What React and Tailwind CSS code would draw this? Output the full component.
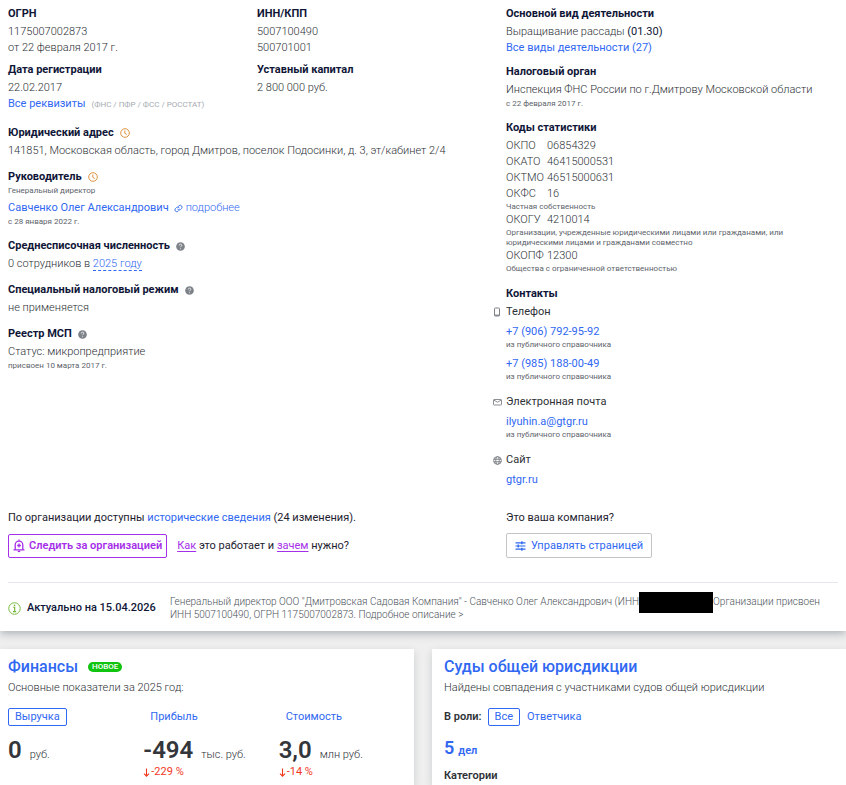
import React, { useState } from 'react';
import clsx from 'clsx';

const statCodes = [
  { name: 'ОКПО', value: '06854329' },
  { name: 'ОКАТО', value: '46415000531' },
  { name: 'ОКТМО', value: '46515000631' },
  { name: 'ОКФС', value: '16', note: 'Частная собственность' },
  {
    name: 'ОКОГУ',
    value: '4210014',
    note: 'Организации, учрежденные юридическими лицами или гражданами, или юридическими лицами и гражданами совместно',
  },
  { name: 'ОКОПФ', value: '12300', note: 'Общества с ограниченной ответственностью' },
];

const finance = [
  { tab: 'Выручка', value: '0', unit: 'руб.' },
  { tab: 'Прибыль', value: '-494', unit: 'тыс. руб.', change: '-229 %' },
  { tab: 'Стоимость', value: '3,0', unit: 'млн руб.', change: '-14 %' },
];

const ClockIcon = () => (
  <svg viewBox="0 0 10 10" className="w-[10px] h-[10px] shrink-0" fill="none" stroke="#dd9340">
    <circle cx="5" cy="5" r="4.3" />
    <path d="M4.8 2.5v2.8l2 1.2" />
  </svg>
);

const HelpIcon = () => (
  <svg viewBox="0 0 10 10" className="w-[9px] h-[9px] shrink-0">
    <circle cx="5" cy="5" r="4.8" fill="#7d8288" />
    <path d="M3.5 3.9c0-2 3-2 3-.2 0 1-1.4 1.1-1.4 2.1M5.1 7v1" fill="none" stroke="#fff" strokeWidth="0.9" />
  </svg>
);

const LinkIcon = () => (
  <svg viewBox="0 0 24 24" className="w-[9px] h-[9px] shrink-0" fill="none" stroke="#3d73f0" strokeWidth="2.6" strokeLinecap="round">
    <path d="M10 14a5 5 0 0 0 7.5.5l3-3a5 5 0 0 0-7-7l-1.7 1.7" />
    <path d="M14 10a5 5 0 0 0-7.5-.5l-3 3a5 5 0 0 0 7 7l1.7-1.7" />
  </svg>
);

const PhoneIcon = () => (
  <svg viewBox="0 0 8 10" className="w-[8px] h-[10px]" fill="none" stroke="#7d8288">
    <rect x="1.5" y="1" width="5" height="8" rx="0.8" />
    <path d="M1.5 8.2h5" strokeWidth="1.2" />
  </svg>
);

const MailIcon = () => (
  <svg viewBox="0 0 9 8" className="w-[9px] h-[8px]" fill="none" stroke="#7d8288" strokeWidth="0.9">
    <rect x="0.5" y="1.5" width="8" height="5.5" rx="0.6" />
    <path d="M1 2.2l3.5 2 3.5-2" />
  </svg>
);

const GlobeIcon = () => (
  <svg viewBox="0 0 10 10" className="w-[9px] h-[9px]" fill="none" stroke="#7d8288" strokeWidth="1.1">
    <circle cx="5" cy="5" r="4.3" />
    <ellipse cx="5" cy="5" rx="2" ry="4.3" />
    <path d="M0.8 3.6h8.4M0.8 6.4h8.4" />
  </svg>
);

const BellIcon = () => (
  <svg viewBox="0 0 12 14" className="w-[12px] h-[14px] shrink-0" fill="none" stroke="#a52ee8" strokeWidth="1.3">
    <path d="M0.5 10.9h11M2.2 10.8V6a3.8 3.8 0 0 1 7.6 0v4.8M6 0.6v1.6" />
    <path d="M6 4.6v3.8M4.1 6.5h3.8" />
    <path d="M4.8 12.4h2.4" strokeWidth="1.4" />
  </svg>
);

const SlidersIcon = () => (
  <svg viewBox="0 0 12 11" className="w-[11px] h-[10px] shrink-0" fill="none" stroke="#2b66f0" strokeWidth="1.3">
    <path d="M0.5 2h11M0.5 5.5h11M0.5 9h11" />
    <path d="M7.5 0.4v3.2M3.5 3.9v3.2M7.5 7.4v3.2" strokeWidth="1.5" />
  </svg>
);

const InfoIcon = () => (
  <svg viewBox="0 0 14 14" className="w-[13px] h-[13px] shrink-0" fill="none" stroke="#6fb536">
    <circle cx="7" cy="7" r="6.2" />
    <path d="M5.6 5.7h1.6v4.6M5.4 10.4h3.4" strokeWidth="1.2" />
    <path d="M6.3 3.6h1.5" strokeWidth="1.5" />
  </svg>
);

const DownIcon = () => (
  <svg viewBox="0 0 7 9" className="w-[7px] h-[9px] shrink-0" fill="none" stroke="#f2371f" strokeWidth="1.1">
    <path d="M3.5 0.5v7.5M1 5.6l2.5 2.6L6 5.6" />
  </svg>
);

const Title = ({ children }) => (
  <h3 className="flex items-center gap-[6px] mb-[2px] font-bold text-[#0f1638]">{children}</h3>
);

const Note = ({ children, className }) => (
  <p className={clsx('text-[8px] font-normal text-[#5d636b]', className)}>{children}</p>
);

const Link = ({ children, className }) => (
  <a href="#" className={clsx('font-normal text-[#3068f2] hover:underline', className)}>{children}</a>
);

const Contact = ({ icon, label, children }) => (
  <div className="relative mb-3">
    <span className="absolute -left-[14px] top-0 w-[10px] h-4 flex items-center justify-center">{icon}</span>
    <h4 className="font-normal text-[#2d3136]">{label}</h4>
    {children}
  </div>
);

const Tab = ({ active, onClick, children }) => (
  <button
    type="button"
    onClick={onClick}
    className={clsx(
      'block h-[18px] px-[6px] rounded-[2px] border font-normal text-[#3068f2] cursor-pointer',
      active ? 'border-[#3068f2]' : 'border-transparent'
    )}
  >
    {children}
  </button>
);

const App = () => {
  const [metric, setMetric] = useState('Выручка');
  const [role, setRole] = useState('Все');

  return (
    <div className="min-h-screen flex flex-col bg-[#efefef] font-['Roboto',sans-serif] font-light text-[11px] leading-4 text-[#2c3036]">
      {/* Company details */}
      <section className="relative bg-white px-2 pt-[6px] pb-[10px] shadow-[0_3px_8px_rgba(60,75,85,0.35)]">
        <div className="grid grid-cols-[3fr_2fr]">
          <div>
            <div className="grid grid-cols-2 gap-y-[6px]">
              <div>
                <Title>ОГРН</Title>
                <p>1175007002873</p>
                <p>от 22 февраля 2017 г.</p>
              </div>
              <div>
                <Title>ИНН/КПП</Title>
                <p>5007100490</p>
                <p>500701001</p>
              </div>
              <div>
                <Title>Дата регистрации</Title>
                <p>22.02.2017</p>
                <p>
                  <Link>Все реквизиты</Link>
                  <span className="ml-[6px] text-[8px] font-normal text-[#a6abb1]">(ФНС / ПФР / ФСС / РОССТАТ)</span>
                </p>
              </div>
              <div>
                <Title>Уставный капитал</Title>
                <p>2 800 000 руб.</p>
              </div>
            </div>

            <div className="mt-3 space-y-[10px]">
              <div>
                <Title>Юридический адрес <ClockIcon /></Title>
                <p>141851, Московская область, город Дмитров, поселок Подосинки, д. 3, эт/кабинет 2/4</p>
              </div>
              <div>
                <h3 className="flex items-center gap-[6px] font-bold text-[#0f1638]">Руководитель <ClockIcon /></h3>
                <Note className="leading-3 mb-[3px]">Генеральный директор</Note>
                <p className="flex items-center">
                  <Link>Савченко Олег Александрович</Link>
                  <a href="#" className="ml-[5px] flex items-center gap-[3px] text-[#3068f2]"><LinkIcon />подробнее</a>
                </p>
                <Note className="leading-3">с 28 января 2022 г.</Note>
              </div>
              <div>
                <Title>Среднесписочная численность <HelpIcon /></Title>
                <p>
                  0 сотрудников в <a href="#" className="text-[#3068f2] border-b border-dashed border-[#3068f2]">2025 году</a>
                </p>
              </div>
              <div>
                <Title>Специальный налоговый режим <HelpIcon /></Title>
                <p>не применяется</p>
              </div>
              <div>
                <Title>Реестр МСП <HelpIcon /></Title>
                <p>Статус: микропредприятие</p>
                <Note className="leading-3">присвоен 10 марта 2017 г.</Note>
              </div>
            </div>
          </div>

          <div>
            <Title>Основной вид деятельности</Title>
            <p>Выращивание рассады <span className="font-normal text-[#0f1638]">(01.30)</span></p>
            <p className="mb-2"><Link>Все виды деятельности (27)</Link></p>

            <Title>Налоговый орган</Title>
            <p>Инспекция ФНС России по г.Дмитрову Московской области</p>
            <Note className="leading-3 mb-[10px]">с 22 февраля 2017 г.</Note>

            <Title>Коды статистики</Title>
            <dl className="mb-3">
              {statCodes.map((code) => (
                <div key={code.name} className="grid grid-cols-[41px_1fr]">
                  <dt>{code.name}</dt>
                  <dd>{code.value}</dd>
                  {code.note && (
                    <dd className="col-span-2 text-[8px] leading-[10px] font-normal text-[#5d636b]">{code.note}</dd>
                  )}
                </div>
              ))}
            </dl>

            <Title>Контакты</Title>
            <Contact icon={<PhoneIcon />} label="Телефон">
              <p className="mt-1"><Link>+7 (906) 792-95-92</Link></p>
              <Note className="leading-[10px]">из публичного справочника</Note>
              <p className="mt-[6px]"><Link>+7 (985) 188-00-49</Link></p>
              <Note className="leading-[10px]">из публичного справочника</Note>
            </Contact>
            <Contact icon={<MailIcon />} label="Электронная почта">
              <p className="mt-1"><Link>ilyuhin.a@gtgr.ru</Link></p>
              <Note className="leading-[10px]">из публичного справочника</Note>
            </Contact>
            <Contact icon={<GlobeIcon />} label="Сайт">
              <p className="mt-1"><Link>gtgr.ru</Link></p>
            </Contact>
          </div>
        </div>

        <div className="grid grid-cols-[3fr_2fr] mt-[10px] mb-6 font-normal text-[#1e2230]">
          <div>
            <p>По организации доступны <Link>исторические сведения</Link> (24 изменения).</p>
            <div className="mt-2 flex items-center">
              <button
                type="button"
                className="h-6 px-1 flex items-center gap-1 rounded-[2px] border border-[#a52ee8] text-[#a52ee8] font-semibold cursor-pointer"
              >
                <BellIcon /> Следить за организацией
              </button>
              <p className="ml-[10px]">
                <a href="#" className="text-[#a52ee8] underline underline-offset-2">Как</a> это работает и{' '}
                <a href="#" className="text-[#a52ee8] underline underline-offset-2">зачем</a> нужно?
              </p>
            </div>
          </div>
          <div>
            <p>Это ваша компания?</p>
            <button
              type="button"
              className="mt-[7px] h-[25px] px-2 flex items-center gap-[5px] rounded-[2px] border border-[#c4c4c4] text-[#3068f2] cursor-pointer"
            >
              <SlidersIcon /> Управлять страницей
            </button>
          </div>
        </div>

        <div className="flex items-center border-t border-[#e4e6f2] pt-3">
          <div className="w-[162px] shrink-0 flex items-center gap-[6px] font-medium text-[#0f1638]">
            <InfoIcon /> Актуально на 15.04.2026
          </div>
          <p className="text-[10px] leading-[13px] text-[#4c525a]">
            Генеральный директор ООО "Дмитровская Садовая Компания" - Савченко Олег Александрович (ИНН
            <span className="inline-block w-[74px] h-[21px] -my-[5px] align-middle bg-black" />
            Организации присвоен
            <br />
            ИНН 5007100490, ОГРН 1175007002873. Подробное описание &gt;
          </p>
        </div>
      </section>

      {/* Summary cards */}
      <div className="mt-[18px] grow grid grid-cols-2 gap-[18px]">
        <section className="bg-white pl-2 pt-2 shadow-[0_3px_8px_rgba(60,75,85,0.2)]">
          <div className="flex items-center gap-[10px]">
            <h2 className="text-[16px] leading-5 font-medium text-[#3068f2]">Финансы</h2>
            <span className="h-[10px] px-1 rounded-full bg-[#10c410] text-[8px] leading-[9px] font-medium text-white">НОВОЕ</span>
          </div>
          <p className="mt-[3px]">Основные показатели за 2025 год:</p>
          <div className="mt-3 grid grid-cols-3">
            {finance.map((item) => (
              <div key={item.tab}>
                <Tab active={metric === item.tab} onClick={() => setMetric(item.tab)}>{item.tab}</Tab>
                <p className="mt-[10px] flex items-baseline gap-2">
                  <span className="text-[24px] leading-7 font-semibold text-[#33363a]">{item.value}</span>
                  <span>{item.unit}</span>
                </p>
                {item.change && (
                  <p className="flex items-center gap-px font-normal text-[#f2371f]"><DownIcon />{item.change}</p>
                )}
              </div>
            ))}
          </div>
        </section>

        <section className="bg-white pl-3 pt-2 shadow-[0_3px_8px_rgba(60,75,85,0.2)]">
          <h2 className="text-[16px] leading-5 font-medium text-[#3068f2]">Суды общей юрисдикции</h2>
          <p className="mt-[3px]">Найдены совпадения с участниками судов общей юрисдикции</p>
          <div className="mt-3 flex items-center">
            <span className="mr-[6px] font-semibold text-[#2d3136]">В роли:</span>
            {['Все', 'Ответчика'].map((name) => (
              <Tab key={name} active={role === name} onClick={() => setRole(name)}>{name}</Tab>
            ))}
          </div>
          <p className="mt-[10px] flex items-baseline gap-1 font-semibold text-[#3068f2]">
            <span className="text-[18px] leading-6">5</span> дел
          </p>
          <h3 className="mt-2 font-semibold text-[#2d3136]">Категории</h3>
        </section>
      </div>
    </div>
  );
};

export default App;
